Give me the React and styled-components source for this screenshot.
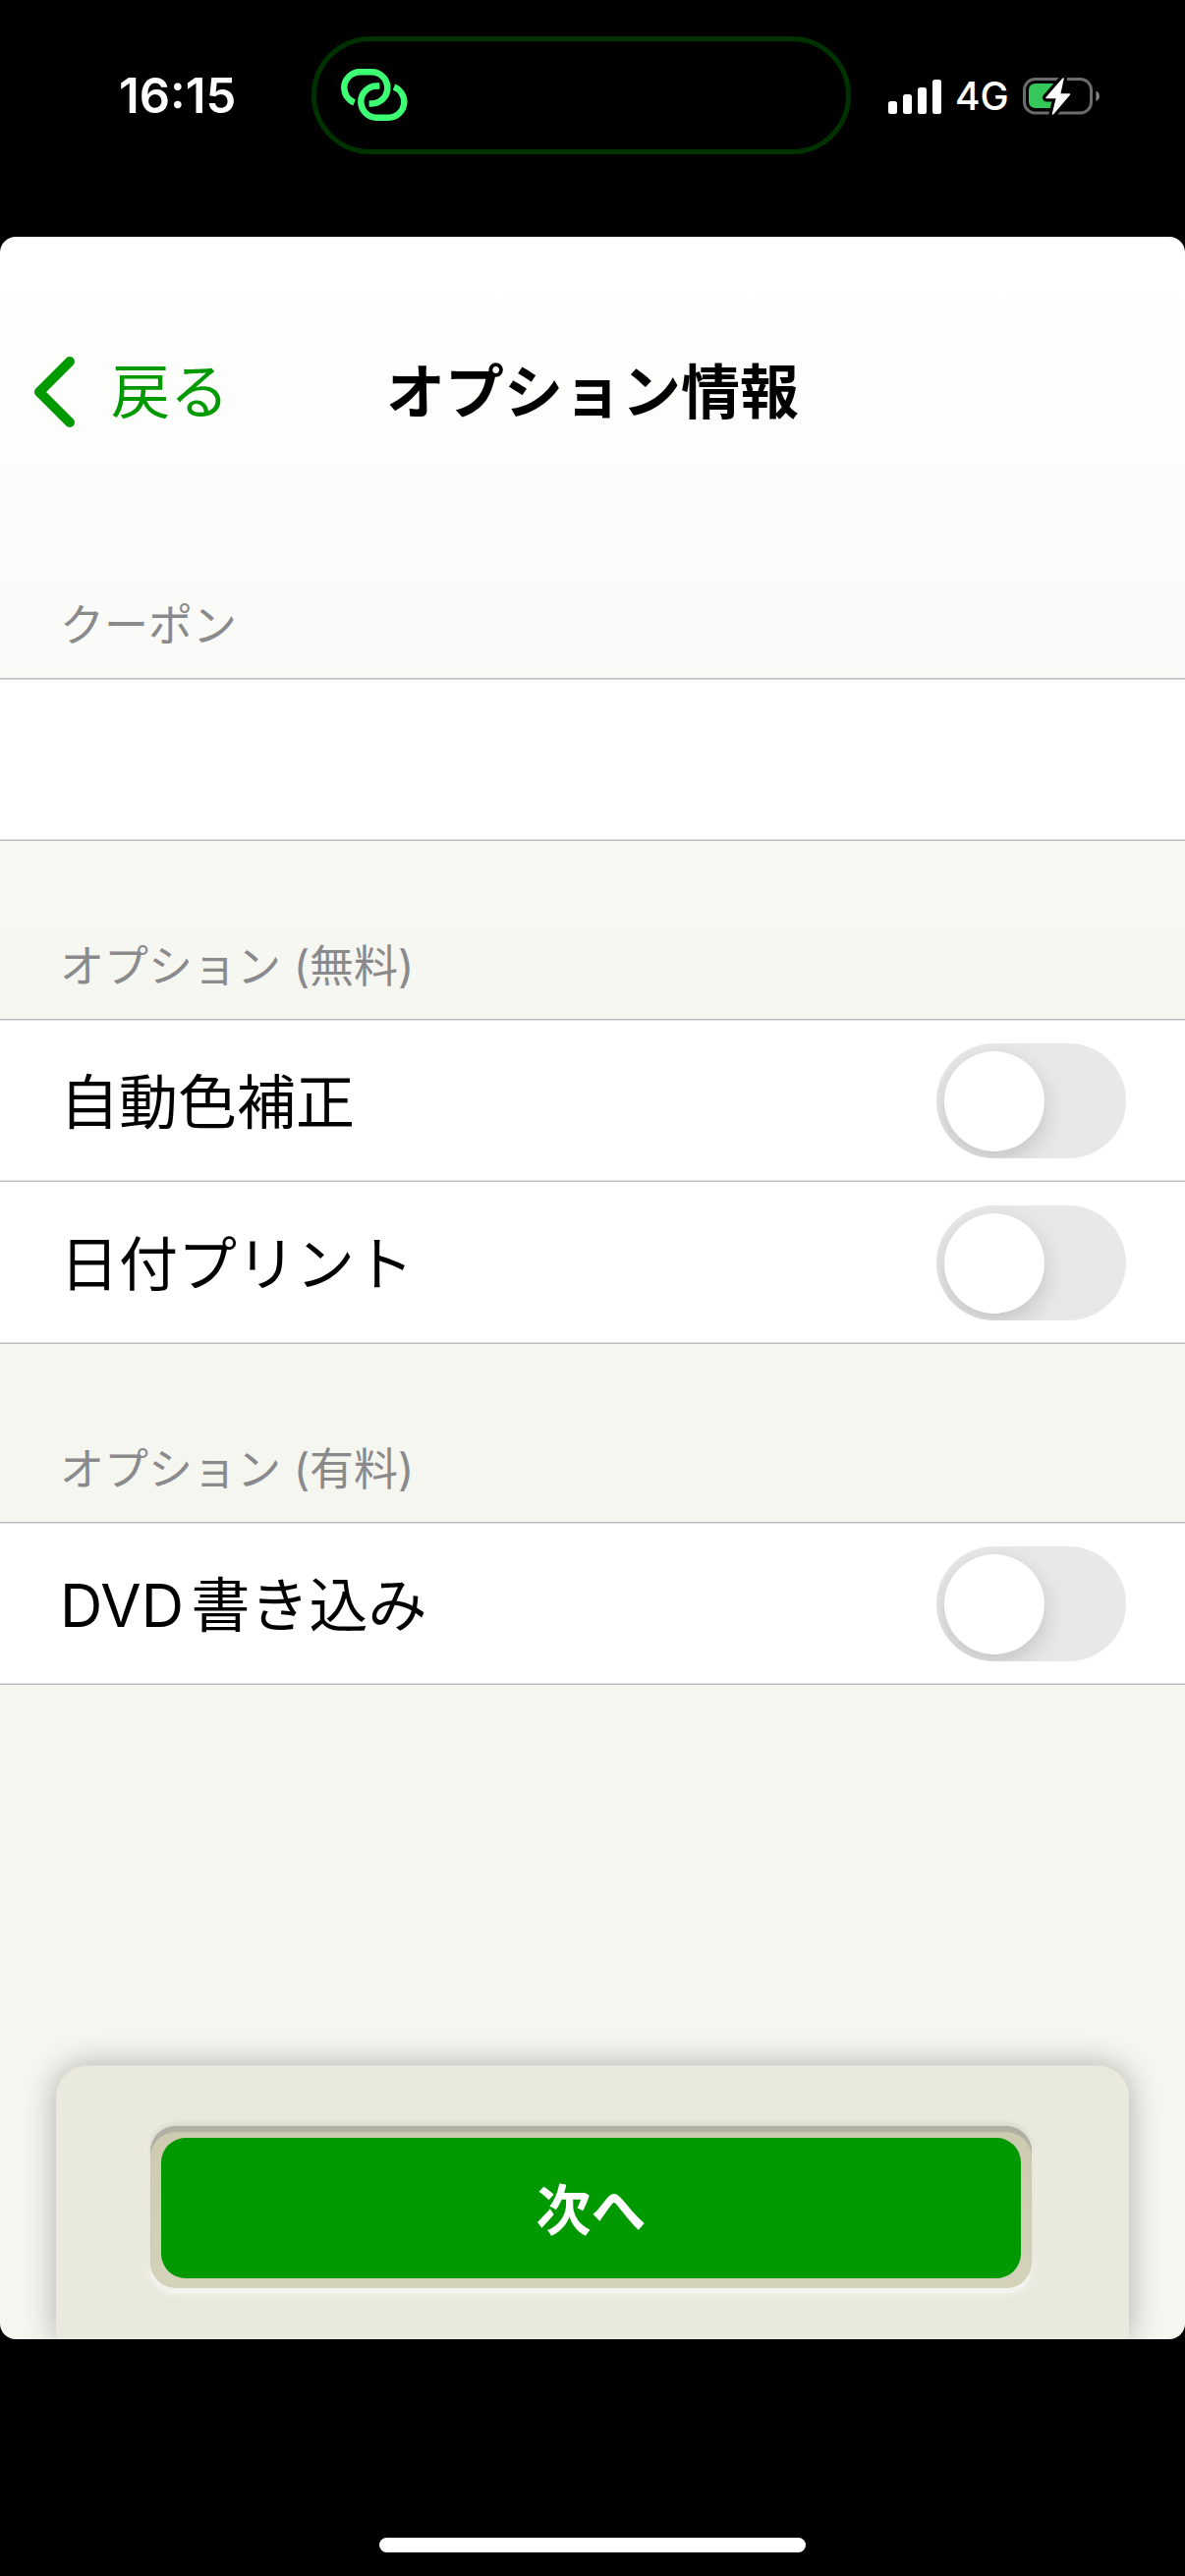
import React, {useState} from 'react';
import styled, {createGlobalStyle} from 'styled-components';

const GlobalStyle = createGlobalStyle`
    *, *::before, *::after {
        box-sizing: border-box;
    }
    body {
        margin: 0;
        background: #000;
        font-family: Inter, 'Noto Sans CJK JP', sans-serif;
        text-autospace: normal;
    }
`;

const Phone = styled.div`
    display: flex;
    flex-direction: column;
    min-height: 100vh;
    background: #000;
`;

const StatusBar = styled.div`
    display: grid;
    grid-template-columns: 317fr 549fr 340fr;
    align-items: center;
    padding: 37px 0 84px;
    color: #fff;
`;

const Clock = styled.time`
    padding: 2px 0 0 121px;
    font-size: 49px;
    line-height: 60px;
    font-weight: 600;
`;

const Island = styled.div`
    display: flex;
    align-items: center;
    height: 120px;
    padding: 0 25px;
    border: 5px solid #003200;
    border-radius: 60px;
`;

const StatusIcons = styled.div`
    display: flex;
    align-items: center;
    gap: 14px;
    padding: 2px 0 0 38px;
`;

const Network = styled.span`
    font-size: 39px;
    line-height: 48px;
    font-weight: 500;
`;

const Screen = styled.main`
    display: flex;
    flex-direction: column;
    flex: 1;
    overflow: hidden;
    border-radius: 16px;
    background: linear-gradient(#fff, #f5f6f0 800px);
`;

const Header = styled.header`
    display: grid;
    grid-template-columns: 1fr auto 1fr;
    align-items: center;
    padding: 110px 34px 62px;
`;

const BackButton = styled.button`
    display: flex;
    align-items: center;
    gap: 36px;
    padding: 0;
    border: none;
    background: none;
    color: #009900;
    font: inherit;
    font-size: 60px;
    line-height: 96px;
    cursor: pointer;
`;

const Title = styled.h1`
    margin: 0;
    font-size: 60px;
    line-height: 96px;
    font-weight: 700;
    color: #000;
`;

const SectionTitle = styled.h2`
    margin: 0;
    padding: 93px 61px 18px;
    font-size: 45px;
    line-height: 70px;
    font-weight: 400;
    color: #8a8a8c;
`;

const List = styled.div`
    border-top: 1px solid #bdbdbd;
`;

const Row = styled.div`
    display: flex;
    align-items: center;
    justify-content: space-between;
    min-height: 165px;
    padding: 0 60px 0 61px;
    border-bottom: 1px solid #bdbdbd;
    box-shadow: inset 0 -1px #e0e0e0;
    background: #fff;

    &:first-child {
        box-shadow: inset 0 1px #d9d9d9, inset 0 -1px #e0e0e0;
    }
`;

const RowLabel = styled.label`
    flex: 1;
    padding-top: 4px;
    font-size: 60px;
    line-height: 96px;
    color: #000;
`;

const CouponInput = styled.input`
    flex: 1;
    height: 96px;
    padding: 0;
    border: none;
    outline: none;
    background: none;
    font: inherit;
    font-size: 60px;
`;

const Switch = styled.input`
    appearance: none;
    display: flex;
    width: 193px;
    height: 117px;
    margin: 0;
    padding: 8px;
    overflow: hidden;
    border-radius: 59px;
    background: #e8e8e8;
    cursor: pointer;

    &::before {
        content: '';
        width: 102px;
        height: 102px;
        border-radius: 50%;
        background: #fff;
        box-shadow: 0 9px 24px rgba(0, 0, 0, 0.16);
    }

    &:checked {
        justify-content: flex-end;
        background: #009900;
    }
`;

const Footer = styled.footer`
    margin: auto 57px 0;
    padding: 62px 99px 52px 96px;
    border-radius: 32px 32px 0 0;
    background: #e9e9dd;
    box-shadow: 0 0 32px rgba(0, 0, 0, 0.3), inset 0 1px #dedfd5;
`;

const ButtonWell = styled.div`
    display: flex;
    padding: 12px 11px 10px;
    border-radius: 26px;
    background: linear-gradient(#cdcab0, #d4d2ba);
    box-shadow:
        inset 0 6px 1px #afafa4,
        0 6px 1px #f3f3ed,
        0 -3px 5px rgba(0, 0, 0, 0.08),
        0 6px 8px rgba(255, 255, 255, 0.5);
`;

const NextButton = styled.button`
    flex: 1;
    padding: 26px 0 21px;
    border: none;
    border-radius: 25px;
    background: #009900;
    color: #fff;
    font: inherit;
    font-size: 56px;
    line-height: 96px;
    font-weight: 700;
    cursor: pointer;
`;

const HomeArea = styled.div`
    display: flex;
    justify-content: center;
    padding: 202px 0 24px;
`;

const HomeIndicator = styled.div`
    width: 36%;
    height: 15px;
    border-radius: 8px;
    background: #fff;
`;

const LinkIcon = () => (
    <svg width="68" height="54" viewBox="0 0 68 54" fill="none" stroke="#3dff74" strokeWidth="6.5">
        <path d="M13.6 34.5A16.6 16.6 0 0 1 3.3 19.4A16.1 16.1 0 0 1 19.4 3.3H31.2A16.1 16.1 0 0 1 31.2 35.5H28.6" />
        <path d="M54 18.5A16.6 16.6 0 0 1 64.3 33.6A16.1 16.1 0 0 1 48.2 49.7H36.4A16.1 16.1 0 0 1 36.4 17.5H39.4" />
    </svg>
);

const SignalIcon = () => (
    <svg width="54" height="35" viewBox="0 0 54 35" fill="#fff">
        <rect x="0" y="22" width="9" height="13" rx="2.5" />
        <rect x="15" y="15" width="9" height="20" rx="2.5" />
        <rect x="30" y="8" width="9" height="27" rx="2.5" />
        <rect x="45" y="0" width="9" height="35" rx="2.5" />
    </svg>
);

const BatteryIcon = () => (
    <svg width="79" height="38" viewBox="0 0 79 38">
        <rect x="1.5" y="1.5" width="68" height="34.5" rx="11" fill="none" stroke="#6c6c6c" strokeWidth="3" />
        <path d="M74.5 13.5C79 16 79 21.5 74.5 24Z" fill="#8a8a8a" />
        <path d="M13 6H31V31H13Q6 31 6 24V13Q6 6 13 6Z" fill="#34c759" />
        <path d="M41 1L24 20.5H34.5L30.5 37L47.5 17H37.5Z" fill="#fff" stroke="#000" strokeWidth="8" strokeLinejoin="round" />
        <path d="M41 1L24 20.5H34.5L30.5 37L47.5 17H37.5Z" fill="#fff" stroke="#fff" strokeWidth="1.5" strokeLinejoin="round" />
    </svg>
);

const BackIcon = () => (
    <svg width="43" height="72" viewBox="0 0 43 72" fill="none" stroke="#009900" strokeWidth="10" strokeLinecap="round" strokeLinejoin="round">
        <path d="M37 5L6 36L37 67" />
    </svg>
);

const sections = [
    {
        title: 'オプション (無料)',
        items: [
            {id: 'autoColor', label: '自動色補正'},
            {id: 'datePrint', label: '日付プリント'},
        ],
    },
    {
        title: 'オプション (有料)',
        items: [{id: 'dvd', label: 'DVD書き込み'}],
    },
];

const App = () => {

    const [coupon, setCoupon] = useState('');
    const [options, setOptions] = useState({autoColor: false, datePrint: false, dvd: false});

    const toggle = (id) => setOptions({...options, [id]: !options[id]});

    return (
        <>
            <GlobalStyle />
            <Phone>
                <StatusBar>
                    <Clock>16:15</Clock>
                    <Island><LinkIcon /></Island>
                    <StatusIcons>
                        <SignalIcon />
                        <Network>4G</Network>
                        <BatteryIcon />
                    </StatusIcons>
                </StatusBar>
                <Screen>
                    <Header>
                        <BackButton type="button"><BackIcon />戻る</BackButton>
                        <Title>オプション情報</Title>
                    </Header>
                    <SectionTitle><label htmlFor="coupon">クーポン</label></SectionTitle>
                    <List>
                        <Row>
                            <CouponInput id="coupon" type="text" value={coupon} onChange={(e) => setCoupon(e.target.value)} />
                        </Row>
                    </List>
                    {sections.map(section => (
                        <section key={section.title}>
                            <SectionTitle>{section.title}</SectionTitle>
                            <List>
                                {section.items.map(item => (
                                    <Row key={item.id}>
                                        <RowLabel htmlFor={item.id}>{item.label}</RowLabel>
                                        <Switch id={item.id} type="checkbox" checked={options[item.id]} onChange={() => toggle(item.id)} />
                                    </Row>
                                ))}
                            </List>
                        </section>
                    ))}
                    <Footer>
                        <ButtonWell>
                            <NextButton type="button">次へ</NextButton>
                        </ButtonWell>
                    </Footer>
                </Screen>
                <HomeArea>
                    <HomeIndicator />
                </HomeArea>
            </Phone>
        </>
    );
};

export default App;
